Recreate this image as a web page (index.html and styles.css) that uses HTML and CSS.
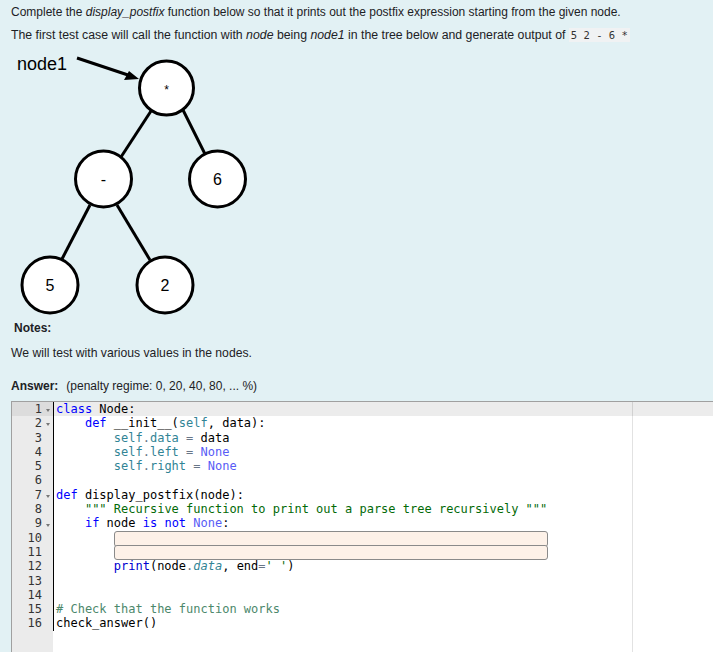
FILE: index.html
```html
<!DOCTYPE html>
<html>
<head>
<meta charset="utf-8">
<link rel="stylesheet" href="styles.css">
</head>
<body>
<div class="que">
  <p class="q1">Complete the <em>display_postfix</em> function below so that it prints out the postfix expression starting from the given node.</p>
  <p class="q2">The first test case will call the function with <em>node</em> being <em>node1</em> in the tree below and generate output of <code class="inline">5 2 - 6 *</code></p>
  <svg class="tree" width="260" height="270" viewBox="11 46 260 270" xmlns="http://www.w3.org/2000/svg">
    <text x="17" y="69" class="lbl">node1</text>
    <line x1="77" y1="57" x2="128" y2="74" stroke="#000" stroke-width="3"/>
    <polygon points="139,78 124,79 129,70" fill="#000"/>
    <line x1="151" y1="110" x2="121" y2="156" stroke="#000" stroke-width="3"/>
    <line x1="183" y1="109" x2="205" y2="153" stroke="#000" stroke-width="3"/>
    <line x1="90" y1="204" x2="62" y2="258" stroke="#000" stroke-width="3"/>
    <line x1="117" y1="204" x2="150" y2="259" stroke="#000" stroke-width="3"/>
    <circle cx="166.5" cy="87" r="27" fill="#fff" stroke="#000" stroke-width="3"/>
    <circle cx="103.5" cy="178" r="28" fill="#fff" stroke="#000" stroke-width="3"/>
    <circle cx="217.5" cy="178" r="28" fill="#fff" stroke="#000" stroke-width="3"/>
    <circle cx="50" cy="284" r="28" fill="#fff" stroke="#000" stroke-width="3"/>
    <circle cx="165" cy="284" r="28" fill="#fff" stroke="#000" stroke-width="3"/>
    <text x="166.5" y="93" class="nv small">*</text>
    <text x="103.5" y="184" class="nv">-</text>
    <text x="217.5" y="184" class="nv">6</text>
    <text x="50" y="290" class="nv">5</text>
    <text x="165" y="290" class="nv">2</text>
  </svg>
  <h4 class="notes-h">Notes:</h4>
  <p class="notes">We will test with various values in the nodes.</p>
  <div class="answer"><b>Answer:</b><span class="penalty">(penalty regime: 0, 20, 40, 80, ... %)</span></div>
  <div class="editor">
    <div class="print-margin"></div>
    <div class="gutter">
      <div class="gcell active">1<span class="fold"></span></div>
      <div class="gcell">2<span class="fold"></span></div>
      <div class="gcell">3<span class="nofold"></span></div>
      <div class="gcell">4<span class="nofold"></span></div>
      <div class="gcell">5<span class="nofold"></span></div>
      <div class="gcell">6<span class="nofold"></span></div>
      <div class="gcell">7<span class="fold"></span></div>
      <div class="gcell">8<span class="nofold"></span></div>
      <div class="gcell">9<span class="fold"></span></div>
      <div class="gcell">10<span class="nofold"></span></div>
      <div class="gcell">11<span class="nofold"></span></div>
      <div class="gcell">12<span class="nofold"></span></div>
      <div class="gcell">13<span class="nofold"></span></div>
      <div class="gcell">14<span class="nofold"></span></div>
      <div class="gcell">15<span class="nofold"></span></div>
      <div class="gcell">16<span class="nofold"></span></div>
    </div>
    <div class="content">
      <div class="lines">
        <div class="ln active"><span class="kw">class</span> Node:</div>
        <div class="ln">    <span class="kw">def</span> __init__(<span class="self">self</span>, data):</div>
        <div class="ln">        <span class="self">self</span><span class="op">.</span><span class="attr">data</span> <span class="op">=</span> data</div>
        <div class="ln">        <span class="self">self</span><span class="op">.</span><span class="attr">left</span> <span class="op">=</span> <span class="const">None</span></div>
        <div class="ln">        <span class="self">self</span><span class="op">.</span><span class="attr">right</span> <span class="op">=</span> <span class="const">None</span></div>
        <div class="ln"> </div>
        <div class="ln"><span class="kw">def</span> display_postfix(node):</div>
        <div class="ln">    <span class="str">""" Recursive function to print out a parse tree recursively """</span></div>
        <div class="ln">    <span class="kw">if</span> node <span class="kw">is</span> <span class="kw">not</span> <span class="const">None</span>:</div>
        <div class="ln">        <span class="slot first"></span></div>
        <div class="ln">        <span class="slot"></span></div>
        <div class="ln">        <span class="fn">print</span>(node<span class="op">.</span><span class="attr it">data</span>, end<span class="op">=</span><span class="str">' '</span>)</div>
        <div class="ln"> </div>
        <div class="ln"> </div>
        <div class="ln"><span class="cm"># Check that the function works</span></div>
        <div class="ln">check_answer()</div>
      </div>
    </div>
  </div>
</div>
</body>
</html>
```

FILE: styles.css
```css
html, body {
  margin: 0;
  padding: 0;
  background: #e2f1f4;
}
body {
  font-family: "Liberation Sans", Arial, sans-serif;
  font-size: 12px;
  color: #1d2125;
  overflow: hidden;
}
.que {
  padding-left: 11px;
  height: 652px;
  overflow: hidden;
}
.q1, .q2 {
  margin: 0;
  height: 16px;
  line-height: 16px;
  white-space: nowrap;
}
.q1 { margin-top: 4px; }
.q2 {
  margin-top: 7px;
  font-size: 12.3px;
}
code.inline {
  font-family: "DejaVu Sans Mono", monospace;
  font-size: 10.5px;
  background: #f0f2f3;
  padding: 1px 2px;
  color: #333;
}
.tree {
  display: block;
  margin-top: 4px;
  margin-left: 0;
}
.lbl {
  font-family: "Liberation Sans", Arial, sans-serif;
  font-size: 18px;
  fill: #000;
}
.nv {
  font-family: "Liberation Sans", Arial, sans-serif;
  font-size: 16px;
  fill: #000;
  text-anchor: middle;
}
.nv.small {
  font-size: 12px;
}
.notes-h {
  margin: 3px 0 0 3px;
  font-size: 12px;
  height: 16px;
  line-height: 16px;
  font-weight: bold;
}
.notes {
  margin: 9px 0 0 0;
  height: 16px;
  line-height: 16px;
  font-size: 12.2px;
}
.answer {
  margin-top: 17px;
  height: 16px;
  line-height: 16px;
}
.penalty {
  margin-left: 8px;
}
.editor {
  position: relative;
  margin-top: 7px;
  height: 251px;
  border-top: 1px solid #a0a0a0;
  border-left: 1px solid #a0a0a0;
  background: #fff;
  display: flex;
  font-family: "DejaVu Sans Mono", monospace;
  font-size: 12px;
}
.print-margin {
  position: absolute;
  left: 620px;
  top: 0;
  bottom: 0;
  width: 1px;
  background: #e2e2e2;
}
.gutter {
  width: 41px;
  flex: none;
  background: #ebebeb;
  color: #333;
}
.gcell {
  height: 14.3px;
  line-height: 14.3px;
  display: flex;
  justify-content: flex-end;
  align-items: center;
}
.gcell.active {
  background: #dcdcdc;
}
.fold, .nofold {
  display: inline-block;
  width: 11px;
  height: 14px;
  position: relative;
}
.fold::after {
  content: "";
  position: absolute;
  left: 4px;
  top: 7px;
  border-left: 2.5px solid transparent;
  border-right: 2.5px solid transparent;
  border-top: 3px solid #777;
}
.content {
  flex: 1;
  position: relative;
}
.lines {
  border-left: 1px solid #000;
  display: inline-block;
  width: calc(100% - 1px);
}
.ln {
  height: 14.3px;
  line-height: 14.3px;
  white-space: pre;
  padding-left: 2px;
  color: #000;
  position: relative;
}
.ln.active {
  background: rgba(0, 0, 0, 0.075);
}
.kw { color: #0000ff; }
.self { color: #318495; }
.attr { color: #318495; }
.it { font-style: italic; }
.op { color: #687687; }
.const { color: #585cf6; }
.str { color: #036a07; }
.cm { color: #4c886b; }
.fn { color: #0000d0; }
.slot {
  display: inline-block;
  vertical-align: top;
  width: 432px;
  height: 13.3px;
  border: 1px solid #8a8a8a;
  border-radius: 3px;
  background: #fdf1e8;
  margin-top: 0;
}
.slot.first {
  height: 14.3px;
  margin-top: 0;
}
```
